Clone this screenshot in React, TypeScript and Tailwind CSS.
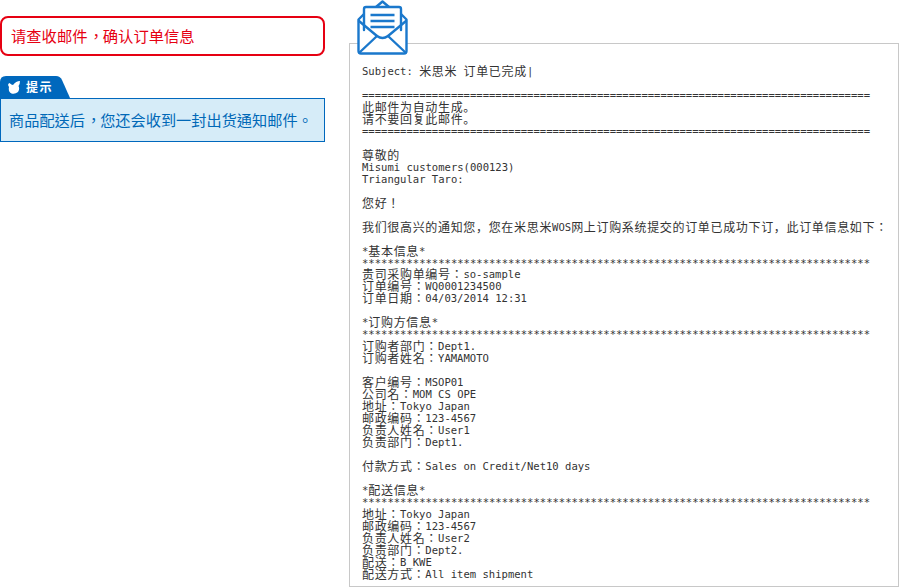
const stars = '*'.repeat(80)
const equals = '='.repeat(80)

const emailLines = [
  'Subject: 米思米 订单已完成|',
  '',
  equals,
  '此邮件为自动生成。',
  '请不要回复此邮件。',
  equals,
  '',
  '尊敬的',
  'Misumi customers(000123)',
  'Triangular Taro:',
  '',
  '您好！',
  '',
  '我们很高兴的通知您，您在米思米WOS网上订购系统提交的订单已成功下订，此订单信息如下：',
  '',
  '*基本信息*',
  stars,
  '贵司采购单编号：so-sample',
  '订单编号：WQ0001234500',
  '订单日期：04/03/2014 12:31',
  '',
  '*订购方信息*',
  stars,
  '订购者部门：Dept1.',
  '订购者姓名：YAMAMOTO',
  '',
  '客户编号：MSOP01',
  '公司名：MOM CS OPE',
  '地址：Tokyo Japan',
  '邮政编码：123-4567',
  '负责人姓名：User1',
  '负责部门：Dept1.',
  '',
  '付款方式：Sales on Credit/Net10 days',
  '',
  '*配送信息*',
  stars,
  '地址：Tokyo Japan',
  '邮政编码：123-4567',
  '负责人姓名：User2',
  '负责部门：Dept2.',
  '配送：B_KWE',
  '配送方式：All item shipment',
]

// latin runs get a 6.35px cell, cjk runs a 12.67px cell
function EmailLine({ text }: { text: string }) {
  const parts = text.split(/([^\x00-\x7f]+)/).filter(Boolean)
  return (
    <div className="h-[11.98px] whitespace-pre">
      {parts.map((part, i) =>
        /[^\x00-\x7f]/.test(part) ? (
          <span
            key={i}
            lang="ja"
            className="inline-block h-[12px] align-top text-[12px] leading-[12px] tracking-[0.67px] font-['Noto_Sans_CJK_JP',sans-serif] [text-spacing-trim:space-all]"
          >
            {part}
          </span>
        ) : (
          <span key={i} className="inline-block h-[12px] align-top text-[10.55px] leading-[12px]">
            {part}
          </span>
        ),
      )}
    </div>
  )
}

function MailIcon() {
  return (
    <svg
      className="absolute left-[8px] top-0"
      width="52"
      height="56"
      viewBox="0 0 52 56"
      fill="none"
      stroke="#1a78cc"
      strokeWidth="2.4"
      strokeLinejoin="round"
      strokeLinecap="round"
    >
      <path d="M7 14 L1.5 19.5 V51 Q1.5 53.5 4 53.5 H47 Q49.5 53.5 49.5 51 V19.5 L44 14 Z" fill="#fff" />
      <path d="M19 7 L25.5 1.5 L32 7" fill="#fff" />
      <path d="M7 31 V9 Q7 7 9 7 H42 Q44 7 44 9 V31 L32 40 H19 Z" fill="#fff" stroke="none" />
      <path d="M7 30 V9 Q7 7 9 7 H42 Q44 7 44 9 V30" />
      <path d="M2 21 L20 36 Q25.5 40 31 36 L49 21" />
      <path d="M2.5 52.5 L20 36 M48.5 52.5 L31 36" />
      <path d="M13.5 15 H37.5 M13.5 21 H37.5 M13.5 27 H37.5" strokeLinecap="butt" />
    </svg>
  )
}

function TipTab() {
  return (
    <div className="flex h-[22px] w-[72px] items-center gap-[5px] bg-[#0068bd] pl-[8px] [clip-path:path('M0_22V6Q0_0_6_0H56Q60_0_62_4L70_22Z')]">
      <svg width="13" height="14" viewBox="8 6 13 14" className="mt-[1px] shrink-0">
        <path
          d="M9 12 Q7 9 9.5 8 Q11.5 10 13 10 Q16 6 20 6 Q20 9 18.5 11 Q20 14 18 17 Q15 19.5 11.5 18.5 Q8 17 9 12 Z"
          fill="#fff"
        />
      </svg>
      <span className="text-[12px] font-bold leading-[18px] tracking-[1.5px] text-white">提示</span>
    </div>
  )
}

export default function App() {
  return (
    <div className="flex h-[588px] w-[899px] overflow-hidden bg-white font-['DejaVu_Sans_Mono',monospace] text-[#333]">
      <div className="w-[325px] shrink-0 pt-[16px] font-['Noto_Sans_CJK_TC',sans-serif] [text-spacing-trim:space-all]">
        <div className="flex h-[40px] items-center rounded-[8px] border-2 border-[#e60012] pb-[2px] pl-[9px] text-[15.3px] text-[#e60012]">
          <p>
            请查收邮件<span className="ml-[1px] mr-[-1px] inline-block">，</span>确认订单信息
          </p>
        </div>
        <div className="mt-[20px]">
          <TipTab />
          <div className="flex h-[44px] items-center border border-[#0068bd] bg-[#d6ecf8] pb-[2px] pl-[8px] text-[15.2px] text-[#0068b7]">
            <p>
              商品配送后<span className="ml-[1px] mr-[-1px] inline-block">，</span>您还会收到一封出货通知邮件。
            </p>
          </div>
        </div>
      </div>

      <div className="relative ml-[24px] flex-1 pt-[43px]">
        <div className="h-[544px] overflow-hidden border border-[#c8c8c8] pl-[12px] pt-[21px]">
          {emailLines.map((line, i) => (
            <EmailLine key={i} text={line} />
          ))}
        </div>
        <MailIcon />
      </div>
    </div>
  )
}
